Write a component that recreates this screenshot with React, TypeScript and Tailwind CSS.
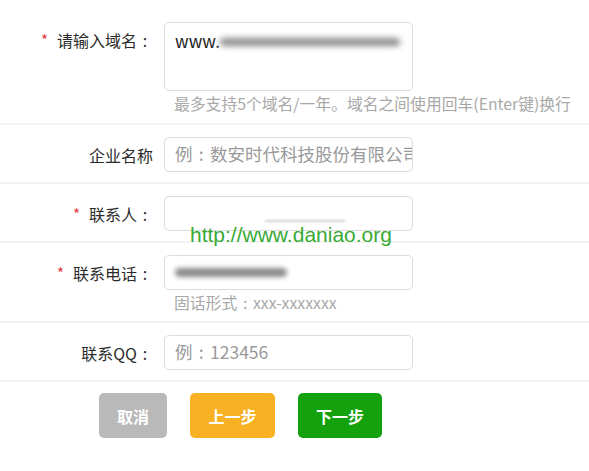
const font = { fontFamily: '"Noto Sans CJK SC", "Noto Sans", sans-serif' }

function Colon() {
  return <span className="inline-block w-[1em] text-center">:</span>
}

function Label({ text, required, colon = true }: { text: string; required?: boolean; colon?: boolean }) {
  return (
    <div className="w-[153px] shrink-0 flex justify-end items-center h-[35px] text-[16px] text-[#2b2b2b]">
      {required && <span className="text-[#e4393c] text-[15px] mr-[9px] leading-none">*</span>}
      <span>
        {text}
        {colon && <Colon />}
      </span>
    </div>
  )
}

function Field({ children }: { children: React.ReactNode }) {
  return (
    <div className="w-[249px] h-[35px] border border-[#dcdcdc] rounded-[5px] bg-white flex items-center px-[10px] text-[17.5px] overflow-hidden whitespace-nowrap">
      {children}
    </div>
  )
}

export default function App() {
  return (
    <div className="relative w-[589px] h-[471px] bg-white overflow-hidden" style={font}>
      {/* domain */}
      <div className="flex gap-[11px] pt-[22px] border-b-2 border-[#f3f3f3] h-[125px]">
        <Label text="请输入域名" required />
        <div>
          <div className="w-[249px] h-[69px] border border-[#dcdcdc] rounded-[5px] px-[10px] pt-[5px] text-[17px] text-[#222] flex items-start">
            <span>www.</span>
            <span className="mt-[10px] h-[8px] w-[180px] bg-[#8a8a8a] rounded-full blur-[3px]" />
          </div>
          <div className="mt-[1px] ml-[10px] text-[15.8px] text-[#a8a8a8] whitespace-nowrap">
            最多支持5个域名/一年。域名之间使用回车(Enter键)换行
          </div>
        </div>
      </div>

      {/* company */}
      <div className="flex gap-[11px] pt-[12px] h-[59px] border-b-2 border-[#f3f3f3]">
        <Label text="企业名称" colon={false} />
        <Field>
          <span className="text-[#999]">
            例<Colon />数安时代科技股份有限公司
          </span>
        </Field>
      </div>

      {/* contact */}
      <div className="flex gap-[11px] pt-[12px] h-[59px] border-b-2 border-[#f3f3f3]">
        <Label text="联系人" required />
        <Field>
          <span className="mt-[14px] ml-[90px] h-[2px] w-[80px] bg-[#d0d0d0] blur-[1px]" />
        </Field>
      </div>

      {/* phone */}
      <div className="flex gap-[11px] pt-[12px] h-[80px] border-b-2 border-[#f3f3f3]">
        <Label text="联系电话" required />
        <div>
          <Field>
            <span className="h-[9px] w-[112px] bg-[#8a8a8a] rounded-full blur-[2.5px]" />
          </Field>
          <div className="mt-[1px] ml-[10px] text-[15.8px] text-[#a8a8a8]">
            固话形式<Colon />xxx-xxxxxxx
          </div>
        </div>
      </div>

      {/* qq */}
      <div className="flex gap-[11px] pt-[12px] h-[59px] border-b-2 border-[#f3f3f3]">
        <Label text="联系QQ" />
        <Field>
          <span className="text-[#999]">
            例<Colon />123456
          </span>
        </Field>
      </div>

      {/* buttons */}
      <div className="flex pt-[11px] pl-[99px] gap-[23px]">
        <button className="w-[68px] h-[45px] rounded-[5px] bg-[#b9b9b9] text-white font-bold text-[16px]">取消</button>
        <button className="w-[85px] h-[45px] rounded-[5px] bg-[#f8b122] text-white font-bold text-[16px]">上一步</button>
        <button className="w-[84px] h-[45px] rounded-[5px] bg-[#13a10e] text-white font-bold text-[16px]">下一步</button>
      </div>

      {/* watermark */}
      <div
        className="absolute left-[190px] top-[224px] text-[21px] leading-none text-[#39a935] pointer-events-none"
        style={{ fontFamily: '"Liberation Sans", Arial, sans-serif' }}
      >
        http://www.daniao.org
      </div>
    </div>
  )
}
